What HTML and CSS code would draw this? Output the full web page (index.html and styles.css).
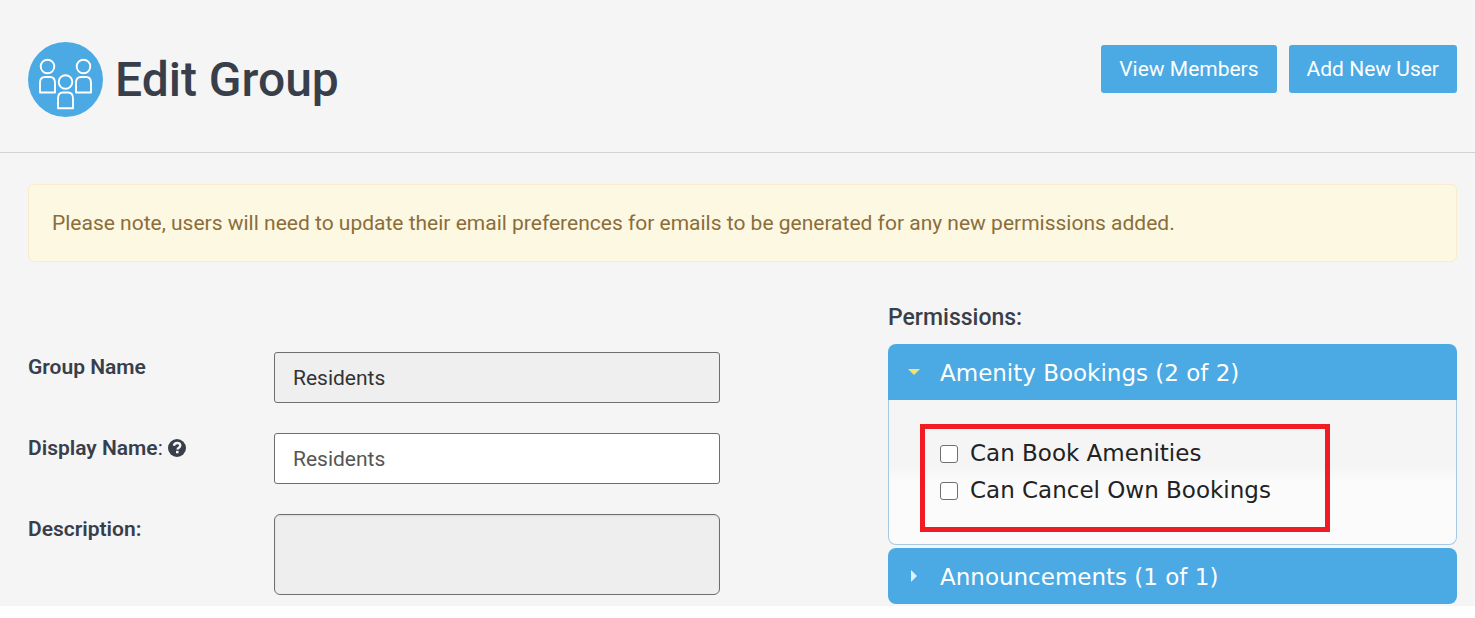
FILE: index.html
```html
<!DOCTYPE html>
<html lang="en">
<head>
<meta charset="utf-8">
<meta name="viewport" content="width=device-width, initial-scale=1">
<title>Edit Group</title>
<link rel="stylesheet" href="styles.css">
</head>
<body>
<div class="page">
  <header class="header">
    <div class="heading">
      <svg class="heading-icon" viewBox="0 0 75 75" aria-hidden="true">
        <circle cx="37.5" cy="37.5" r="37.5" fill="#4ba9e4"/>
        <g fill="none" stroke="#fff" stroke-width="1.9" stroke-linejoin="round">
          <circle cx="19.500" cy="24.500" r="6.800"/>
          <circle cx="55.500" cy="24.500" r="6.800"/>
          <circle cx="37.500" cy="40" r="6.800"/>
          <path d="M12 50.500V41q0-6 5-6h5q5 0 5 6v9.500z"/>
          <path d="M48 50.500V41q0-6 5-6h5q5 0 5 6v9.500z"/>
          <path d="M30 66.200V56.500q0-6 5-6h5q5 0 5 6v9.700z"/>
        </g>
      </svg>
      <h1 class="title">Edit Group</h1>
    </div>
    <div class="actions">
      <button type="button" class="button">View Members</button>
      <button type="button" class="button">Add New User</button>
    </div>
  </header>
  <main class="main">
    <p class="notice">Please note, users will need to update their email preferences for emails to be generated for any new permissions added.</p>
    <form class="columns">
      <div class="fields">
        <label class="label" for="group-name">Group Name</label>
        <input class="input input-locked" id="group-name" type="text" value="Residents" readonly>
        <div class="label">
          <label for="display-name">Display Name</label><span class="colon">:</span>
          <svg class="help" viewBox="0 0 18 18" aria-hidden="true">
            <circle cx="9" cy="9" r="9" fill="#383f4b"/>
            <path d="M5.900 6.700C6.200 4.900 7.400 4 9.100 4c1.900 0 3.200 1 3.200 2.600 0 2.200-2.800 2.100-2.800 4" fill="none" stroke="#f5f5f5" stroke-width="2.300"/>
            <path d="M8 11.800h2.600v2.500H8z" fill="#f5f5f5"/>
          </svg>
        </div>
        <input class="input" id="display-name" type="text" value="Residents">
        <label class="label" for="description">Description:</label>
        <textarea class="input textarea" id="description" readonly></textarea>
      </div>
      <section class="permissions">
        <h2 class="permissions-title">Permissions:</h2>
        <button type="button" class="section-head section-open" aria-expanded="true"><span class="arrow arrow-down"></span><span class="section-name">Amenity Bookings (2 of 2)</span></button>
        <div class="panel">
          <div class="options">
            <label class="option"><input type="checkbox" class="check">Can Book Amenities</label>
            <label class="option"><input type="checkbox" class="check">Can Cancel Own Bookings</label>
          </div>
        </div>
        <button type="button" class="section-head" aria-expanded="false"><span class="arrow arrow-right"></span><span class="section-name">Announcements (1 of 1)</span></button>
      </section>
    </form>
  </main>
</div>
</body>
</html>
```
FILE: styles.css
```css
* { box-sizing: border-box; }
body {
  margin: 0;
  background: #fff;
  color: #383f4b;
  font: 21px/30px Roboto, sans-serif;
}
.page { background: #f5f5f5; }
.header {
  display: flex;
  justify-content: space-between;
  align-items: flex-start;
  padding: 42px 18px 35px 28px;
  border-bottom: 1px solid #d2d4d4;
}
.heading { display: flex; align-items: center; gap: 12px; }
.heading-icon { width: 75px; height: 75px; }
.title { margin: 0; font-size: 48px; line-height: 56px; font-weight: 500; }
.actions { display: flex; gap: 12px; padding-top: 3px; }
.button {
  height: 48px;
  padding: 0 18px;
  border: 0;
  border-radius: 3px;
  background: #4ba9e4;
  color: #fff;
  font: inherit;
}
.main { padding: 31px 18px 2px 28px; }
.notice {
  margin: 0 0 40px;
  padding: 23px;
  border: 1px solid #faebcc;
  border-radius: 6px;
  background: #fdf8e2;
  color: #8a6d3b;
}
.columns {
  display: grid;
  grid-template-columns: 692fr 569fr;
  column-gap: 168px;
  align-items: start;
}
.fields {
  display: grid;
  grid-template-columns: 246px 1fr;
  row-gap: 30px;
  padding-top: 50px;
}
.label { font-weight: 600; }
.colon { font-weight: 400; }
.help { width: 18px; height: 18px; vertical-align: -2px; }
.input {
  width: 100%;
  height: 51px;
  padding: 0 18px;
  border: 1px solid #6e6e6e;
  border-radius: 3px;
  background: #fff;
  color: #555;
  font: inherit;
}
.input-locked { background: #efefef; color: #333; }
.textarea {
  display: block;
  height: 81px;
  border-radius: 6px;
  background: #eee;
  box-shadow: inset 0 1px 2px rgba(0, 0, 0, 0.08);
  resize: none;
}
.permissions-title { margin: 0 0 10px; font-size: 23px; line-height: 32px; font-weight: 500; }
.section-head {
  display: flex;
  align-items: center;
  width: 100%;
  height: 56px;
  padding: 0 20px;
  border: 0;
  border-radius: 8px;
  background: #4ba9e4;
  color: #fff;
  font: 23px/30px "DejaVu Sans", sans-serif;
  text-align: left;
}
.section-open { border-radius: 8px 8px 0 0; }
.section-name { padding-top: 2px; }
.arrow { flex: none; width: 32px; }
.arrow::before { content: ""; display: block; width: 0; border: 6px solid transparent; }
.arrow-down::before { border-top-color: #f9e06c; border-bottom: 0; }
.arrow-right::before { margin-left: 3px; border-left-color: #d8f5ff; border-right: 0; }
.panel {
  margin-bottom: 3px;
  padding: 24px 31px 12px;
  border: 1px solid #a6c9e2;
  border-top: 0;
  border-radius: 0 0 8px 8px;
  background: linear-gradient(#f5f5f5 46%, #fbfbfb 57%);
}
.options {
  max-width: 410px;
  padding: 6px 15px 18px;
  border: 5px solid #ef1c24;
}
.option {
  display: flex;
  align-items: center;
  gap: 12px;
  color: #222;
  font: 23px/37px "DejaVu Sans", sans-serif;
}
.check {
  appearance: none;
  flex: none;
  width: 18px;
  height: 18px;
  margin: 0;
  border: 1px solid #6f6f6f;
  border-radius: 3px;
  background: #fff;
}
.check:checked { background: #4ba9e4; }
```
